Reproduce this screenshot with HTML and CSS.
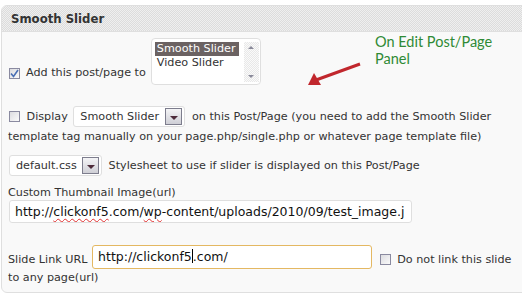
FILE: index.html
```html
<!DOCTYPE html>
<html lang="en">
<head>
    <meta charset="UTF-8">
    <title>Smooth Slider</title>
    <link rel="stylesheet" href="styles.css">
</head>
<body>
    <div class="panel">
        <h3 class="panel-title">Smooth Slider</h3>
        <div class="panel-body">
            <div class="row row-add">
                <span class="check checked"><svg width="9" height="9" viewBox="0 0 9 9"><path d="M1 4.5 L3.5 7.5 L8 1" fill="none" stroke="#4a6fb5" stroke-width="1.6"/></svg></span>
                <span class="label">Add this post/page to</span>
                <div class="listbox">
                    <div class="options">
                        <div class="option selected">Smooth Slider</div>
                        <div class="option">Video Slider</div>
                    </div>
                    <div class="scroll">
                        <span class="arrow up"></span>
                        <span class="arrow down"></span>
                    </div>
                </div>
            </div>

            <p class="row row-display">
                <span class="check"></span>
                Display
                <span class="select select-slider">Smooth Slider<span class="drop"></span></span>
                on this Post/Page (you need to add the Smooth Slider template tag manually on your page.php/single.php or whatever page template file)
            </p>

            <p class="row row-css">
                <span class="select select-css">default.css<span class="drop"></span></span>
                Stylesheet to use if slider is displayed on this Post/Page
            </p>

            <label class="field-label">Custom Thumbnail Image(url)</label>
            <div class="textbox textbox-wide">http://<span class="typo">clickonf5</span>.com/<span class="typo">wp</span>-content/uploads/2010/09/test_image.j</div>

            <p class="row row-link">
                Slide Link URL
                <span class="textbox textbox-focus">http://clickonf5<span class="caret"></span>.com/</span>
                <span class="check"></span>
                Do not link this slide to any page(url)
            </p>
        </div>

        <div class="note">On Edit Post/Page<br>Panel</div>
        <svg class="note-arrow" width="60" height="30" viewBox="0 0 60 30">
            <line x1="56" y1="4" x2="12" y2="20" stroke="#c1272d" stroke-width="3"/>
            <polygon points="4,25 10,13 17,25" fill="#c1272d"/>
        </svg>
    </div>
</body>
</html>
```

FILE: styles.css
```css
body {
    margin: 0;
    background: #fff;
    overflow: hidden;
    font-family: "DejaVu Sans", Verdana, sans-serif;
    font-size: 11.2px;
    color: #333;
}

.panel {
    position: relative;
    margin: 5px 0 0 1px;
    width: 540px;
    height: 288px;
    box-sizing: border-box;
    border: 1px solid #dfdfdf;
    border-radius: 6px 0 0 6px;
    background: #f9f9f9;
    overflow: hidden;
}

.panel-title {
    margin: 0;
    height: 25px;
    line-height: 26px;
    padding-left: 9px;
    font-family: "DejaVu Sans Condensed", Verdana, sans-serif;
    font-size: 13px;
    font-weight: bold;
    color: #333;
    border-bottom: 1px solid #dfdfdf;
    background-color: #e6e6e6;
    background-image: repeating-conic-gradient(#dcdcdc 0 25%, #efefef 0 50%);
    background-size: 2px 2px;
}

.panel-body {
    padding: 6px 0 0 6px;
    width: 510px;
}

.row {
    margin: 0;
    line-height: 18px;
}

.row-add {
    display: flex;
    align-items: flex-end;
    height: 47px;
}

.check {
    display: inline-flex;
    align-items: center;
    justify-content: center;
    width: 11px;
    height: 11px;
    box-sizing: border-box;
    border: 1px solid #8a8aa0;
    background: linear-gradient(135deg, #dcdce0, #fafafa);
    vertical-align: -2px;
    margin: 0 3px 0 1px;
}

.row-add .check {
    margin-bottom: 6px;
}

.row-add .label {
    margin: 0 5px 3px 3px;
}

.listbox {
    display: flex;
    width: 110px;
    height: 47px;
    box-sizing: border-box;
    border: 1px solid #dfdfdf;
    border-radius: 4px;
    background: #fff;
    padding: 3px 1px 2px 3px;
}

.options {
    flex: 1;
    line-height: 14px;
}

.option {
    padding-left: 2px;
}

.option.selected {
    background: #6b6262;
    color: #fff;
}

.scroll {
    position: relative;
    width: 15px;
    margin-left: 5px;
    background-color: #f2f2f2;
    background-image: repeating-conic-gradient(#e8e8e8 0 25%, #fafafa 0 50%);
    background-size: 2px 2px;
}

.arrow {
    position: absolute;
    left: 4px;
    width: 0;
    height: 0;
    border-left: 3px solid transparent;
    border-right: 3px solid transparent;
}

.arrow.up {
    top: 4px;
    border-bottom: 3px solid #8a8a9a;
}

.arrow.down {
    bottom: 4px;
    border-top: 3px solid #8a8a9a;
}

.row-display {
    margin-top: 21px;
    padding-right: 10px;
    line-height: 19px;
}

.select {
    display: inline-flex;
    align-items: center;
    height: 21px;
    box-sizing: border-box;
    border: 1px solid #dfdfdf;
    border-radius: 3px;
    background: #fff;
    padding: 0 2px 0 6px;
    vertical-align: middle;
    line-height: 19px;
    margin: 0 3px 0 2px;
}

.select-slider {
    width: 112px;
}

.select-css {
    width: 93px;
    margin-left: 1px;
}

.drop {
    margin-left: auto;
    width: 17px;
    height: 17px;
    box-sizing: border-box;
    border: 1px solid #7d7d8d;
    background: linear-gradient(#f4f4f6, #cfcfd6);
    position: relative;
}

.drop::after {
    content: "";
    position: absolute;
    left: 4px;
    top: 7px;
    border-left: 4px solid transparent;
    border-right: 4px solid transparent;
    border-top: 4px solid #4d2b3a;
}

.row-css {
    margin-top: 9px;
}

.field-label {
    display: block;
    margin-top: 10px;
    line-height: 14px;
}

.textbox {
    display: inline-block;
    box-sizing: border-box;
    border: 1px solid #dfdfdf;
    border-radius: 3px;
    background: #fff;
    font-family: "DejaVu Sans", Tahoma, sans-serif;
    font-size: 12.5px;
    color: #111;
    white-space: nowrap;
    overflow: hidden;
}

.textbox-wide {
    display: block;
    width: 403px;
    height: 23px;
    line-height: 21px;
    padding-left: 5px;
    margin-left: 1px;
}

.typo {
    text-decoration: underline wavy #e03030;
    text-decoration-thickness: 1px;
    text-underline-offset: 2px;
}

.row-link {
    margin-top: 22px;
}

.textbox-focus {
    width: 280px;
    height: 24px;
    line-height: 22px;
    padding-left: 5px;
    border: 1px solid #e4b862;
    vertical-align: -6px;
    margin: 0 3px 0 1px;
}

.caret {
    display: inline-block;
    width: 1px;
    height: 14px;
    background: #000;
    vertical-align: -2px;
}

.note {
    position: absolute;
    left: 373px;
    top: 27px;
    font-family: Lato, "Open Sans", sans-serif;
    font-size: 14.5px;
    line-height: 17px;
    color: #2f8a35;
}

.note-arrow {
    position: absolute;
    left: 302px;
    top: 54px;
}
```
